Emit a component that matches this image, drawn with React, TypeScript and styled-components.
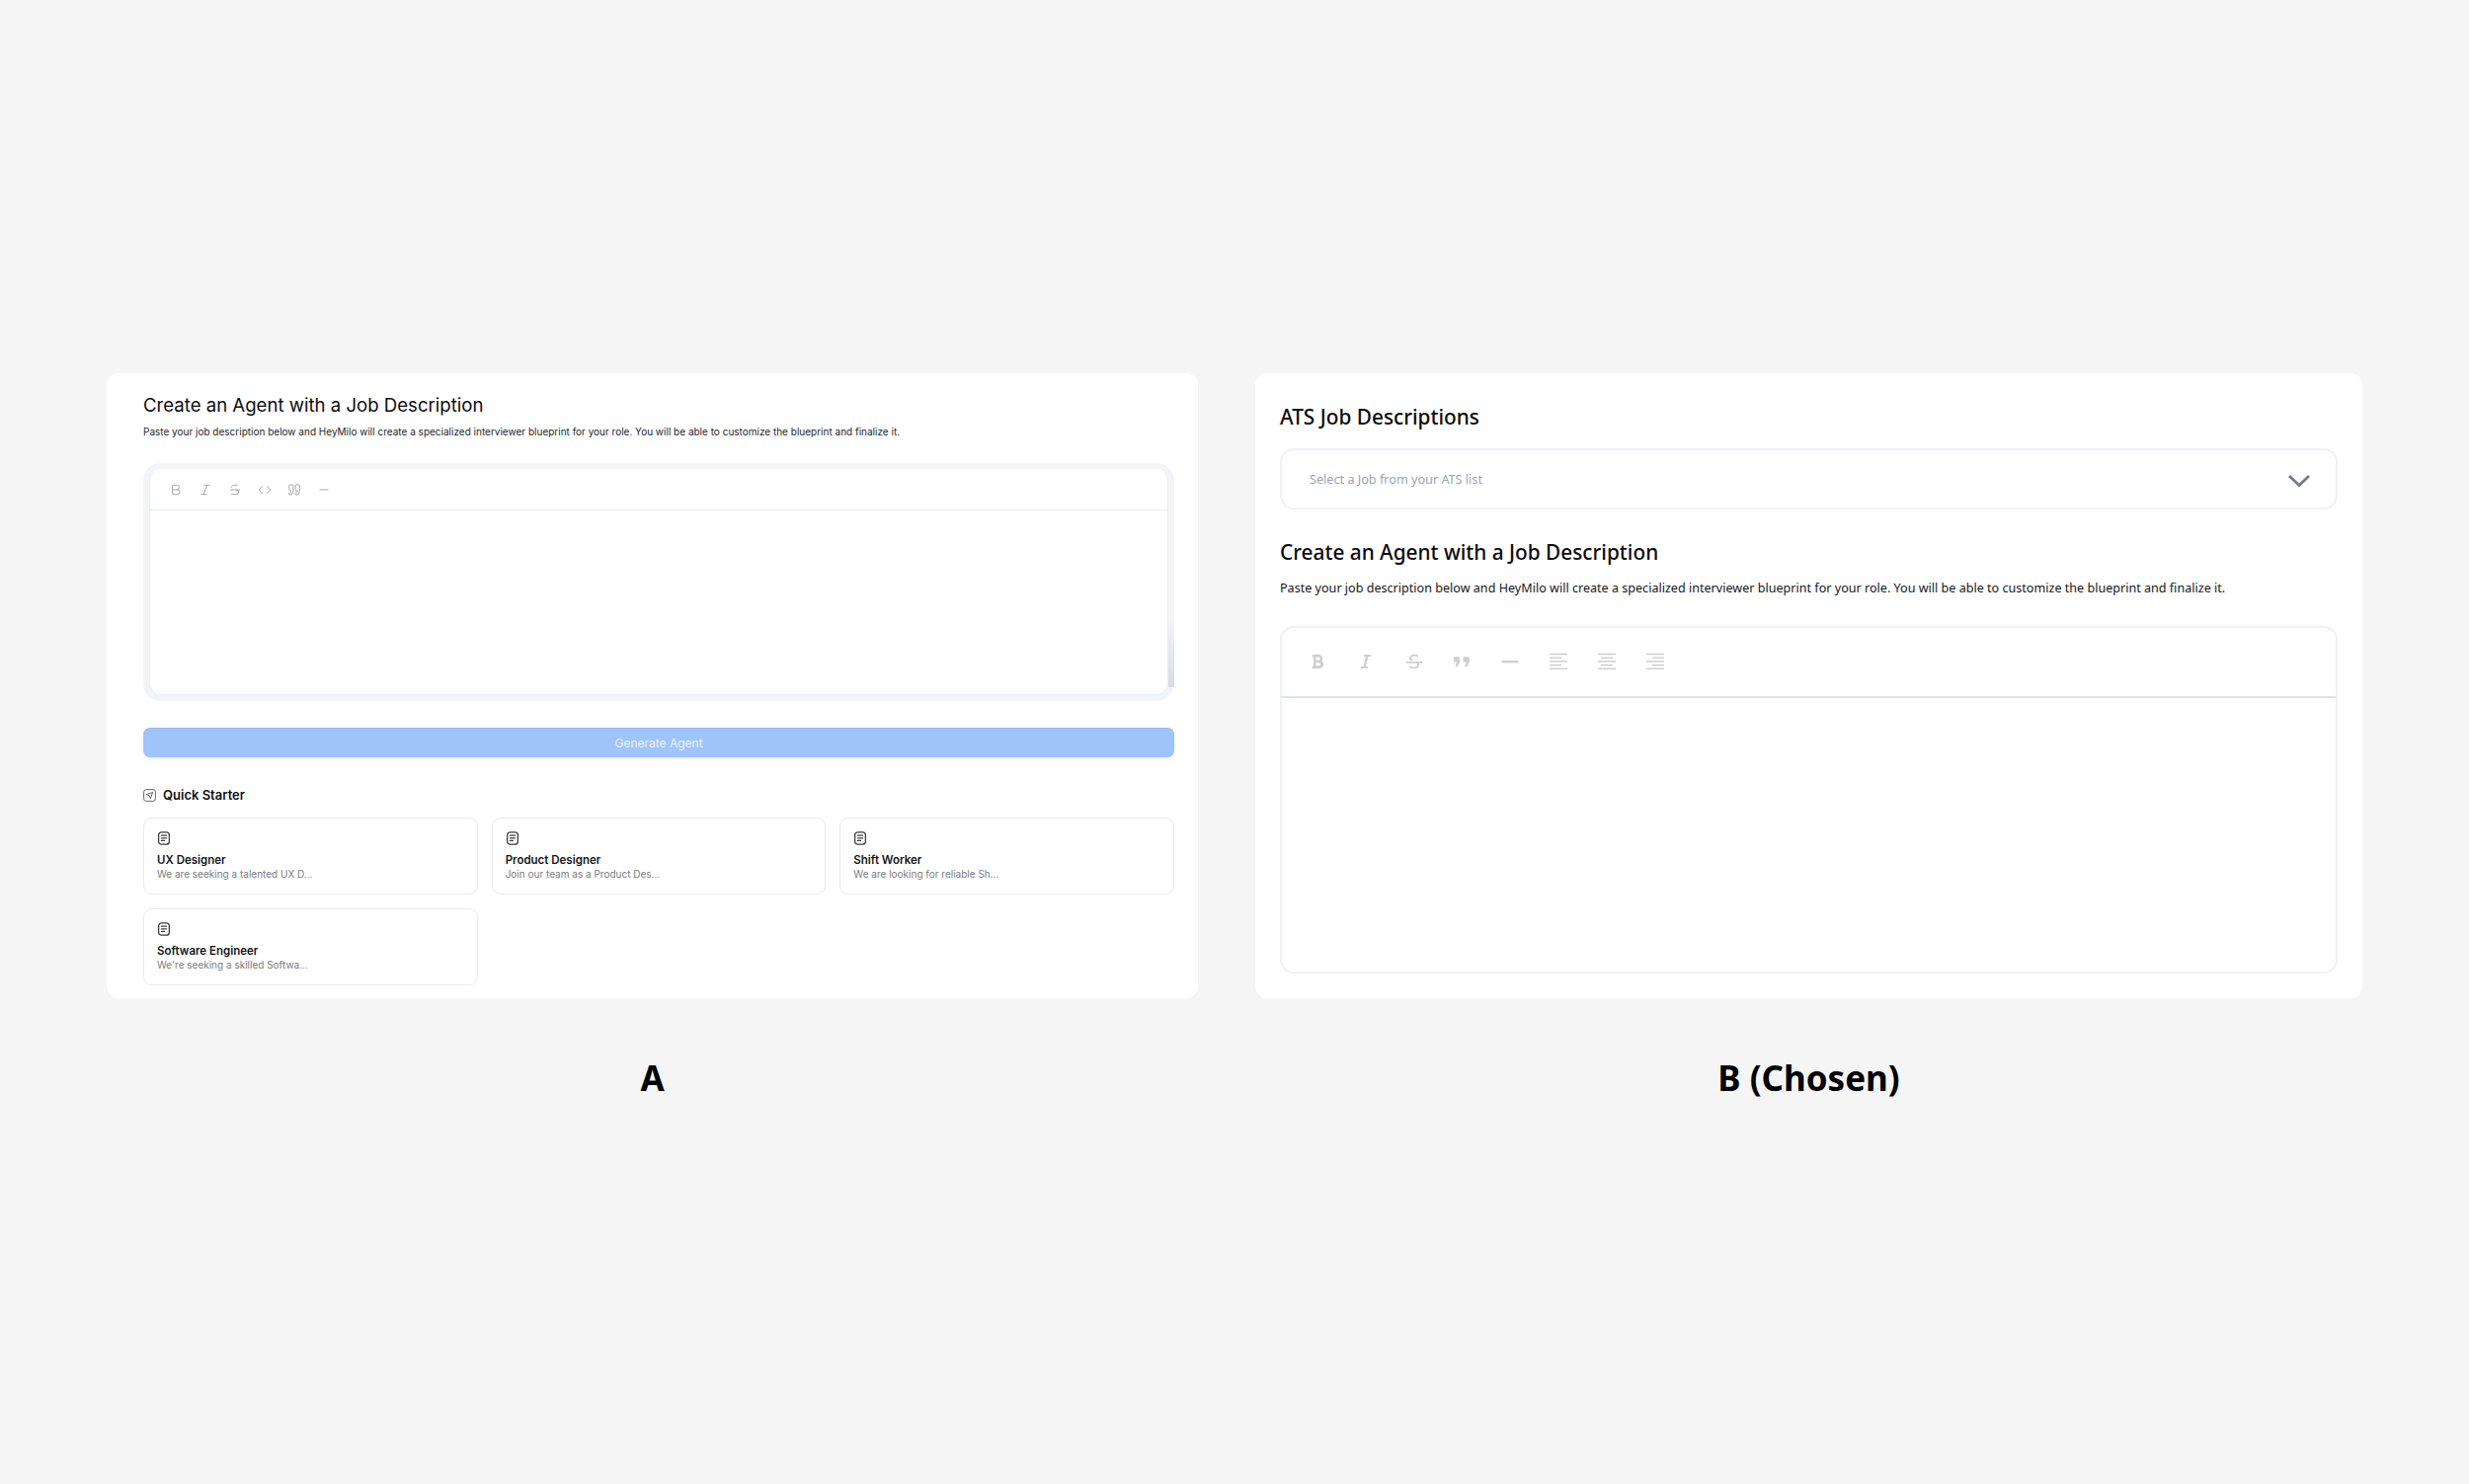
import styled, {createGlobalStyle} from 'styled-components';
import {Bold, Code, Italic, Minus, Quote, Strikethrough} from 'lucide-react';
import {FaBold, FaItalic} from 'react-icons/fa';
import {RiStrikethrough} from 'react-icons/ri';

const GlobalStyle = createGlobalStyle`
    html, body {
        margin: 0;
        padding: 0;
        background: #f5f5f5;
    }

    * {
        box-sizing: border-box;
    }
`

const starters = [
    {title: 'UX Designer', text: 'We are seeking a talented UX D...'},
    {title: 'Product Designer', text: 'Join our team as a Product Des...'},
    {title: 'Shift Worker', text: 'We are looking for reliable Sh...'},
    {title: 'Software Engineer', text: "We're seeking a skilled Softwa..."},
];

const DocIcon = () => (
    <svg width="14" height="14" viewBox="0 0 14 14" fill="none" stroke="#3d3d3d" strokeWidth="1.3" strokeLinecap="round">
        <rect x="1.6" y="0.8" width="10.8" height="12.4" rx="3"/>
        <path d="M4.4 4.2h5.2M4.4 6.8h5.2M4.4 9.4h3"/>
    </svg>
);

const SendIcon = () => (
    <svg width="13" height="13" viewBox="0 0 13 13" fill="none" stroke="#555" strokeWidth="0.9" strokeLinejoin="round">
        <rect x="0.6" y="0.6" width="11.8" height="11.8" rx="2.6"/>
        <path d="M9.6 3.5 3.2 5.6l2.9 1.2 1.2 2.9z"/>
    </svg>
);

const QuoteSolid = () => (
    <svg width="18" height="14" viewBox="0 0 18 14" fill="#cfcfcf">
        <path d="M1 2.2h6.2v4.8L5 12.2H2.6l1.3-4.6H1z"/>
        <path d="M10.6 2.2h6.2v4.8l-2.2 5.2h-2.4l1.3-4.6h-2.9z"/>
    </svg>
);

const RuleIcon = () => (
    <svg width="18" height="14" viewBox="0 0 18 14" fill="#cfcfcf">
        <rect x="0.5" y="6" width="17" height="2.4"/>
    </svg>
);

const AlignIcon = ({lines}: {lines: number[][]}) => (
    <svg width="18" height="18" viewBox="0 0 18 18" stroke="#cfcfcf" strokeWidth="1.5">
        {lines.map(([from, to], i) => (
            <path key={i} d={`M${from} ${1.5 + i * 3.7}H${to}`}/>
        ))}
    </svg>
);

const alignLeft = [[0, 18], [0, 12], [0, 18], [0, 12], [0, 18]];
const alignCenter = [[0, 18], [3, 15], [0, 18], [3, 15], [0, 18]];
const alignRight = [[0, 18], [6, 18], [0, 18], [6, 18], [0, 18]];

export default function App() {
    return (
        <Page>
            <GlobalStyle/>
            <Columns>
                <Column>
                    <PanelA>
                        <TitleA>Create an Agent with a Job Description</TitleA>
                        <SubtitleA>
                            Paste your job description below and HeyMilo will create a specialized interviewer blueprint for your role. You will be able to customize the blueprint and finalize it.
                        </SubtitleA>
                        <EditorFrame>
                            <EditorInner>
                                <ToolbarA>
                                    <Bold size={14} strokeWidth={1.5}/>
                                    <Italic size={14} strokeWidth={1.5}/>
                                    <Strikethrough size={14} strokeWidth={1.5}/>
                                    <Code size={14} strokeWidth={1.5}/>
                                    <Quote size={14} strokeWidth={1.5}/>
                                    <Minus size={14} strokeWidth={1.5}/>
                                </ToolbarA>
                            </EditorInner>
                        </EditorFrame>
                        <GenerateButton type="button">Generate Agent</GenerateButton>
                        <StarterHeader>
                            <SendIcon/>
                            <span>Quick Starter</span>
                        </StarterHeader>
                        <StarterGrid>
                            {starters.map((item) => (
                                <StarterCard key={item.title}>
                                    <DocIcon/>
                                    <StarterTitle>{item.title}</StarterTitle>
                                    <StarterText>{item.text}</StarterText>
                                </StarterCard>
                            ))}
                        </StarterGrid>
                    </PanelA>
                    <Caption>A</Caption>
                </Column>
                <Column>
                    <PanelB>
                        <TitleB>ATS Job Descriptions</TitleB>
                        <SelectBox>
                            <Placeholder>Select a Job from your ATS list</Placeholder>
                            <svg width="24" height="14" viewBox="0 0 24 14" fill="none" stroke="#6f7c90" strokeWidth="2.8">
                                <path d="M2 2l10 9.5L22 2"/>
                            </svg>
                        </SelectBox>
                        <TitleB $spaced>Create an Agent with a Job Description</TitleB>
                        <SubtitleB>
                            Paste your job description below and HeyMilo will create a specialized interviewer blueprint for your role. You will be able to customize the blueprint and finalize it.
                        </SubtitleB>
                        <EditorB>
                            <ToolbarB>
                                <ToolSlot><FaBold size={16}/></ToolSlot>
                                <ToolSlot><FaItalic size={16}/></ToolSlot>
                                <ToolSlot><RiStrikethrough size={22}/></ToolSlot>
                                <ToolSlot><QuoteSolid/></ToolSlot>
                                <ToolSlot><RuleIcon/></ToolSlot>
                                <ToolSlot><AlignIcon lines={alignLeft}/></ToolSlot>
                                <ToolSlot><AlignIcon lines={alignCenter}/></ToolSlot>
                                <ToolSlot><AlignIcon lines={alignRight}/></ToolSlot>
                            </ToolbarB>
                        </EditorB>
                    </PanelB>
                    <Caption>B (Chosen)</Caption>
                </Column>
            </Columns>
        </Page>
    );
}

const Page = styled.div`
    width: 2500px;
    height: 1503px;
    padding: 378px 108px 0 108px;
    background: #f5f5f5;
    overflow: hidden;
`

const Columns = styled.div`
    display: grid;
    grid-template-columns: 1105px 1121px;
    column-gap: 58px;
`

const Column = styled.div`
    display: flex;
    flex-direction: column;
`

const PanelA = styled.section`
    height: 633px;
    padding: 19px 24px 13px 37px;
    background: #fff;
    border-radius: 12px;
    font-family: Inter, "Liberation Sans", sans-serif;
`

const TitleA = styled.h2`
    margin: 0;
    font-size: 18.6px;
    line-height: 26px;
    font-weight: 400;
    color: #0c0c0f;
`

const SubtitleA = styled.p`
    margin: 7px 0 0;
    font-size: 10px;
    line-height: 14px;
    color: #25262b;
`

const EditorFrame = styled.div`
    position: relative;
    height: 241px;
    margin-top: 25px;
    border: 6px solid #f1f4f9;
    border-radius: 18px;

    &::after {
        content: '';
        position: absolute;
        right: -6px;
        bottom: 8px;
        width: 6px;
        height: 70px;
        background: linear-gradient(to bottom, rgba(190, 197, 208, 0), rgba(190, 197, 208, 0.5));
    }
`

const EditorInner = styled.div`
    height: 100%;
    border: 1px solid #e9edf4;
    border-top-color: #fff;
    border-radius: 12px;
    overflow: hidden;
`

const ToolbarA = styled.div`
    display: flex;
    align-items: center;
    gap: 16px;
    height: 41px;
    padding-left: 19px;
    border-bottom: 1.5px solid #e8ebf2;
    color: #9c9c9c;
`

const GenerateButton = styled.button`
    display: block;
    width: 100%;
    height: 30px;
    margin-top: 27px;
    border: 0;
    border-top: 1px solid #93b9fa;
    border-radius: 7px;
    background: #9fc3fb;
    box-shadow: 0 2px 4px rgba(60, 70, 90, 0.08);
    color: #eef4ff;
    font-family: inherit;
    font-size: 12px;
    font-weight: 400;
`

const StarterHeader = styled.div`
    display: flex;
    align-items: center;
    gap: 7px;
    height: 16px;
    margin-top: 30px;
    font-size: 13px;
    font-weight: 600;
    color: #101114;
`

const StarterGrid = styled.div`
    display: grid;
    grid-template-columns: repeat(3, 1fr);
    gap: 14px;
    margin-top: 15px;
`

const StarterCard = styled.div`
    display: flex;
    flex-direction: column;
    height: 78px;
    padding: 13px 13px 0;
    border: 1px solid #e8ebf3;
    border-radius: 9px;
    background: #fff;
`

const StarterTitle = styled.div`
    margin-top: 8px;
    font-size: 11.5px;
    line-height: 15px;
    font-weight: 600;
    color: #15161a;
`

const StarterText = styled.div`
    margin-top: -1px;
    font-size: 10px;
    line-height: 14px;
    color: #7b7c80;
`

const PanelB = styled.section`
    height: 633px;
    padding: 31px 25px 26px;
    background: #fff;
    border-radius: 12px;
    font-family: "Noto Sans", "Open Sans", sans-serif;
`

const TitleB = styled.h2<{$spaced?: boolean}>`
    margin: ${(p) => (p.$spaced ? '30px' : '0')} 0 0;
    font-size: 20.8px;
    line-height: 27px;
    font-weight: 500;
    color: #0b0b0d;
`

const SelectBox = styled.div`
    display: flex;
    align-items: center;
    justify-content: space-between;
    height: 62px;
    margin-top: 18px;
    padding: 4px 25px 0 28px;
    border: 2px solid #eff1f6;
    border-radius: 14px;
`

const Placeholder = styled.span`
    margin-top: -4px;
    font-size: 12.65px;
    color: #9ba4b5;
`

const SubtitleB = styled.p`
    margin: 14px 0 0;
    font-size: 12.58px;
    line-height: 18px;
    color: #17181b;
`

const EditorB = styled.div`
    height: 352px;
    margin-top: 29px;
    border: 2px solid #eff1f6;
    border-radius: 14px;
`

const ToolbarB = styled.div`
    display: flex;
    align-items: center;
    gap: 26.8px;
    height: 71px;
    padding: 0 0 2px 25px;
    border-bottom: 2px solid #dfe2e8;
    color: #cfcfcf;
`

const ToolSlot = styled.span`
    display: flex;
    align-items: center;
    justify-content: center;
    width: 22px;
    height: 22px;
`

const Caption = styled.div`
    margin-top: 57px;
    text-align: center;
    font-family: "Noto Sans", "Open Sans", sans-serif;
    font-size: 35px;
    line-height: 48px;
    font-weight: 700;
    color: #000;
`
